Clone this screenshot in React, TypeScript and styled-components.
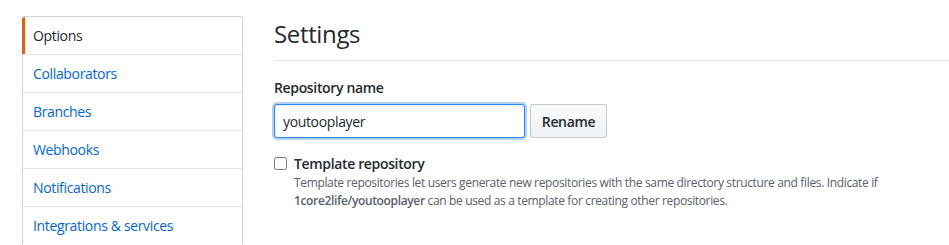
import styled, { createGlobalStyle } from 'styled-components';

const GlobalStyle = createGlobalStyle`
  html, body {
    margin: 0;
    padding: 0;
    overflow: hidden;
    background: #fff;
  }
  body {
    font-family: 'Open Sans', 'Noto Sans', Arial, sans-serif;
    font-size: 14px;
    line-height: 1.5;
    letter-spacing: -0.025em;
    color: #24292e;
  }
`;

const menuItems = ['Options', 'Collaborators', 'Branches', 'Webhooks', 'Notifications', 'Integrations & services'];

export default function App() {
  return (
    <>
      <GlobalStyle />
      <Page>
        <Menu>
          {menuItems.map((item, i) => (
            <MenuItem key={item} $selected={i === 0}>
              {item}
            </MenuItem>
          ))}
        </Menu>

        <Main>
          <Subhead>
            <SubheadHeading>Settings</SubheadHeading>
          </Subhead>

          <FormGroup>
            <Label htmlFor="rename-field">Repository name</Label>
            <RenameRow>
              <TextInput id="rename-field" defaultValue="youtooplayer" />
              <Button type="button">Rename</Button>
            </RenameRow>
          </FormGroup>

          <Checkbox>
            <CheckboxInput type="checkbox" id="template" />
            <CheckboxLabel htmlFor="template">Template repository</CheckboxLabel>
            <Note>
              Template repositories let users generate new repositories with the same directory structure and files. Indicate if{' '}
              <strong>1core2life/youtooplayer</strong> can be used as a template for creating other repositories.
            </Note>
          </Checkbox>
        </Main>
      </Page>
    </>
  );
}

const Page = styled.div`
  display: flex;
  align-items: flex-start;
  gap: 31px;
  padding: 16px 0 0 22px;
`;

const Menu = styled.nav`
  flex: 0 0 221px;
  box-sizing: border-box;
  background: #fff;
  border: 1px solid #d1d5da;
  border-bottom: 0;
  border-radius: 3px 3px 0 0;
`;

const MenuItem = styled.a<{ $selected?: boolean }>`
  position: relative;
  display: block;
  padding: 8px 10px;
  line-height: 21px;
  color: ${(p) => (p.$selected ? '#24292e' : '#0366d6')};
  text-decoration: none;
  cursor: pointer;
  border-bottom: 1px solid #e1e4e8;

  &:last-child {
    border-bottom: 0;
  }

  &::before {
    content: '';
    display: ${(p) => (p.$selected ? 'block' : 'none')};
    position: absolute;
    top: 0;
    bottom: 0;
    left: -1px;
    width: 3px;
    background: #e36209;
    border-top-left-radius: 3px;
  }
`;

const Main = styled.main`
  flex: 1;
  min-width: 0;
`;

const Subhead = styled.div`
  display: flex;
  padding-bottom: 8px;
  margin-bottom: 16px;
  border-bottom: 1px solid #e1e4e8;
`;

const SubheadHeading = styled.h2`
  margin: 0;
  font-size: 24px;
  font-weight: 400;
  line-height: 36px;
`;

const FormGroup = styled.div`
  margin-bottom: 15px;
`;

const Label = styled.label`
  display: block;
  margin-bottom: 6px;
  font-weight: 600;
  line-height: 21px;
`;

const RenameRow = styled.div`
  display: flex;
  gap: 5px;
`;

const TextInput = styled.input`
  box-sizing: border-box;
  width: 251px;
  height: 34px;
  padding: 6px 8px;
  font-family: inherit;
  font-size: 14px;
  letter-spacing: inherit;
  color: #24292e;
  background: #fff;
  border: 1px solid #2188ff;
  border-radius: 3px;
  outline: none;
  box-shadow: inset 0 1px 2px rgba(27, 31, 35, 0.075), 0 0 0 2px rgba(3, 102, 214, 0.3);
`;

const Button = styled.button`
  box-sizing: border-box;
  width: 77px;
  height: 34px;
  padding: 6px 0;
  font-family: inherit;
  font-size: 14px;
  font-weight: 600;
  letter-spacing: inherit;
  color: #24292e;
  background: linear-gradient(-180deg, #fafbfc 0%, #eff3f6 90%);
  border: 1px solid rgba(27, 31, 35, 0.2);
  border-radius: 3px;
  cursor: pointer;
`;

const Checkbox = styled.div`
  padding-left: 20px;
`;

const CheckboxInput = styled.input`
  float: left;
  width: 13px;
  height: 13px;
  margin: 4px 0 0 -20px;
`;

const CheckboxLabel = styled.label`
  display: block;
  font-weight: 600;
  line-height: 21px;
`;

const Note = styled.p`
  margin: 0;
  font-size: 12px;
  line-height: 18px;
  color: #586069;

  strong {
    font-weight: 600;
  }
`;
